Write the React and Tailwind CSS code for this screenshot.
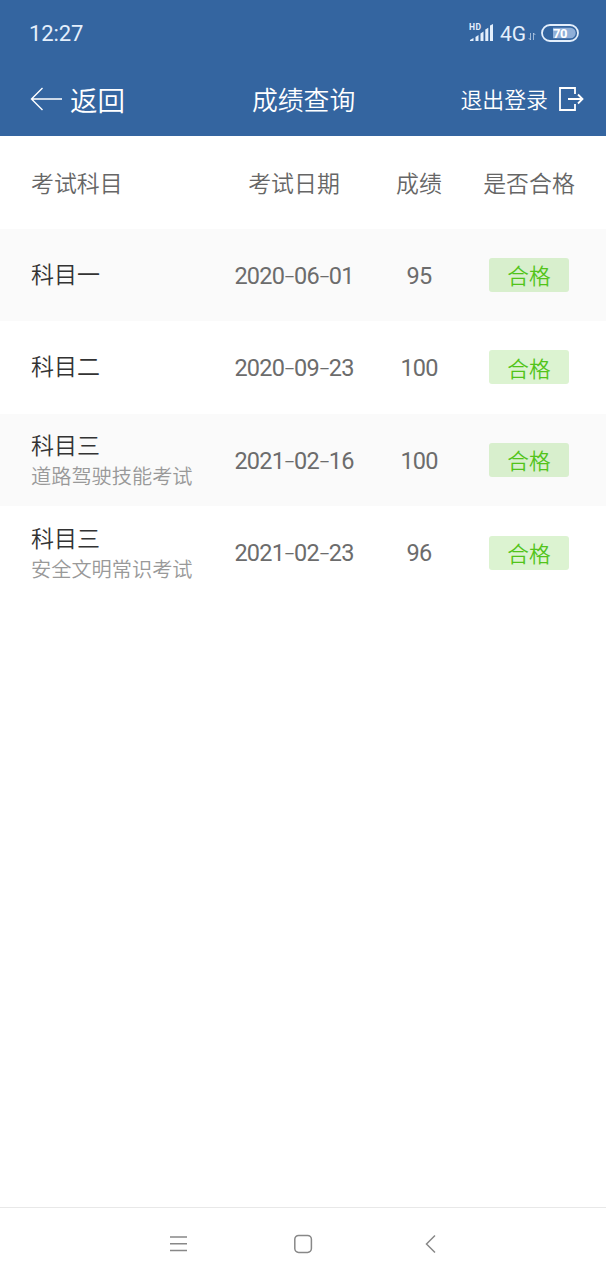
const rows = [
  { name: '科目一', date: ['2020', '06', '01'], score: '95' },
  { name: '科目二', date: ['2020', '09', '23'], score: '100' },
  { name: '科目三', note: '道路驾驶技能考试', date: ['2021', '02', '16'], score: '100' },
  { name: '科目三', note: '安全文明常识考试', date: ['2021', '02', '23'], score: '96' },
];

const grid = 'grid h-[92.6px] shrink-0 grid-cols-[184px_158px_92px_128px] items-center pl-[31px]';

function StatusBar() {
  return (
    <div className="flex h-[66px] items-center justify-between pl-[29px] pr-[27px] text-[#e4effc]">
      <span className="pt-[2px] font-['Roboto',sans-serif] text-[22px] font-normal leading-none tracking-[-0.1px]">12:27</span>
      <div className="flex items-center">
        <svg width="25" height="20" viewBox="0 0 25 20" fill="currentColor">
          <text x="0" y="7" fontSize="8.5" fontWeight="700" fontFamily="Roboto, sans-serif" letterSpacing="0.6">HD</text>
          <path d="M1 18v-1l3.500-2v3zM6.500 18v-4l3-2V18zM11.500 18v-7.500l3-2V18zM16.300 18V6.500l3-1.700V18zM21 18V2.500L24 1v17z" />
        </svg>
        <span className="ml-[6px] pt-[2px] font-['Roboto',sans-serif] text-[21px] font-normal leading-none">4G</span>
        <svg className="ml-[2px] mt-[7px]" width="8" height="9" viewBox="0 0 8 9" fill="none" stroke="currentColor" strokeOpacity="0.6">
          <path d="M2.500 1v7L.7 6M5.500 8V1l1.800 2" />
        </svg>
        <svg className="ml-[5px]" width="38" height="18" viewBox="0 0 38 18">
          <rect x="1" y="1" width="36" height="16" rx="8" fill="none" stroke="currentColor" strokeWidth="1.800" />
          <path d="M12 3.800h17.500a5.200 5.200 0 0 1 0 10.400H12z" fill="#8fafd8" />
          <text x="19" y="13.500" textAnchor="middle" fontSize="13" fontWeight="700" fontFamily="Roboto, sans-serif" letterSpacing="-0.4" fill="#fff">70</text>
        </svg>
      </div>
    </div>
  );
}

function Header() {
  return (
    <div className="grid h-[70px] grid-cols-[222px_1fr_auto] items-center pb-[5px] pl-[30px] pr-[22px] text-white">
      <div className="flex items-center">
        <svg width="32" height="24" viewBox="0 0 32 24" fill="none" stroke="currentColor" strokeWidth="1.400">
          <path d="M12.500 1 1.500 12l11 11M1.500 12H32" />
        </svg>
        <span className="ml-[8px] pt-[2px] text-[27.5px] leading-none">返回</span>
      </div>
      <span className="text-[25.8px] leading-none">成绩查询</span>
      <div className="flex items-center justify-end">
        <span className="text-[21.9px] leading-none">退出登录</span>
        <svg className="ml-[10px]" width="26" height="26" viewBox="0 0 26 26" fill="none" stroke="currentColor" strokeWidth="1.800">
          <path d="M17 8V2H2v22h15v-6M10 13h14M20 8.500l4.500 4.500-4.500 4.500" />
        </svg>
      </div>
    </div>
  );
}

function Row({ row, shaded }) {
  return (
    <div className={`${grid} ${shaded ? 'bg-[#fafafa]' : 'bg-white'}`}>
      <div className={`flex flex-col ${row.note ? '' : 'pb-[3px]'}`}>
        <span className="text-[23px] leading-[31px] text-[#333]">{row.name}</span>
        {row.note && <span className="text-[20.2px] leading-[31px] text-[#999]">{row.note}</span>}
      </div>
      <div className="flex items-center justify-center pt-[3px] font-['Roboto',sans-serif] text-[23.5px] font-normal leading-none tracking-[-0.8px] text-[#6c6c6c]">
        <span>
          {row.date[0]}
          <span className="mx-[2px] inline-block origin-center scale-x-150 font-light">-</span>
          {row.date[1]}
          <span className="mx-[2px] inline-block origin-center scale-x-150 font-light">-</span>
          {row.date[2]}
        </span>
      </div>
      <span className="pt-[3px] text-center font-['Roboto',sans-serif] text-[23.5px] font-normal leading-none tracking-[-0.8px] text-[#6c6c6c]">{row.score}</span>
      <div className="flex justify-center">
        <span className="flex h-[34px] w-[80px] items-center justify-center rounded-[3px] bg-[#52c41a]/20 text-[21.7px] leading-none text-[#52c41a]">合格</span>
      </div>
    </div>
  );
}

export default function App() {
  return (
    <div className="flex h-[1280px] w-[606px] flex-col bg-white font-['Noto_Sans_CJK_SC',sans-serif] font-[350]">
      <header className="h-[136px] shrink-0 bg-[#3465a0]">
        <StatusBar />
        <Header />
      </header>
      <main className="flex grow flex-col">
        <div className={`${grid} pb-[1px] text-[22.9px] text-[#666]`}>
          <span>考试科目</span>
          <span className="text-center">考试日期</span>
          <span className="text-center">成绩</span>
          <span className="text-center">是否合格</span>
        </div>
        {rows.map((row, i) => (
          <Row key={i} row={row} shaded={i % 2 === 0} />
        ))}
      </main>
      <nav className="flex h-[73px] shrink-0 items-center justify-center border-t border-[#e8e8e8] text-[#888]">
        <svg width="272" height="22" viewBox="0 0 272 22" fill="none" stroke="currentColor" strokeWidth="1.500">
          <path d="M3 4h17M3 10.800h17M3 17.500h17" />
          <rect x="127.800" y="2.400" width="16.600" height="17" rx="3.800" />
          <path d="M268 2.500 259.500 11l8.500 8.500" />
        </svg>
      </nav>
    </div>
  );
}
